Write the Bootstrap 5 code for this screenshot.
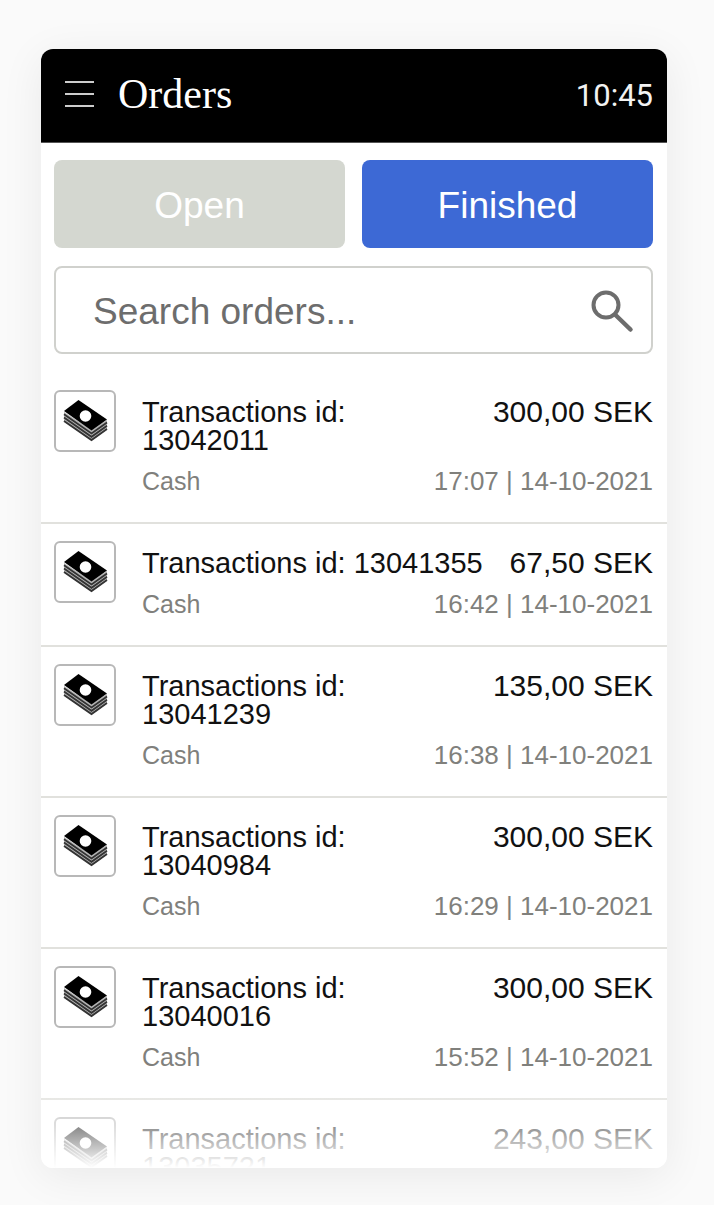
<!DOCTYPE html>
<html lang="en">
<head>
<meta charset="utf-8">
<meta name="viewport" content="width=device-width, initial-scale=1">
<title>Orders</title>
<link href="https://cdn.jsdelivr.net/npm/bootstrap@5.3.0/dist/css/bootstrap.min.css" rel="stylesheet">
<style>
  body { background: #fafafa; font-family: "Liberation Sans", Arial, sans-serif; color: #111; }
  .screen { padding: 49px 47px 37px 41px; }
  .panel { background: #fff; border-radius: 12px; box-shadow: 0 8px 44px rgba(0, 0, 0, .07); }
  .topbar { background: #000; color: #fff; height: 94px; padding: 0 14px 4px 24px; border-bottom: 1px solid #555; }
  .topbar h1 { font-family: "Liberation Serif", "Times New Roman", serif; font-size: 42px; line-height: 48px; }
  .clock { font-family: Roboto, sans-serif; font-size: 31px; line-height: 36px; color: #f2f2f2; padding-top: 4px; }
  .controls { padding: 17px 14px 0 13px; }
  .tabs { gap: 17px; }
  .tab-btn { height: 88px; border: 0; border-radius: 8px; font-size: 37px; line-height: 44px; padding: 4px 0 0; color: #fff; }
  .tab-btn.open { background: #d4d7d0; }
  .tab-btn.finished { background: #3d69d5; }
  .search { height: 88px; margin-top: 18px; border: 2px solid #d0d1cd; border-radius: 8px; padding: 4px 17px 0 37px; }
  .search input { font-size: 37px; line-height: 44px; color: #6d6d6d; padding: 0; }
  .search input::placeholder { color: #6d6d6d; opacity: 1; }
  .orders { margin-top: 19px; }
  .order { padding: 17px 14px 26px 13px; gap: 26px; border-bottom: 2px solid #e1e1dd; }
  .method { width: 62px; height: 62px; border: 2px solid #b8b8b8; border-radius: 6px; }
  .details { padding-top: 8px; min-width: 0; }
  .pair { gap: 20px; }
  .order-id { font-size: 29px; line-height: 28px; }
  .amount { font-size: 30px; line-height: 28px; }
  .meta { margin-top: 12px; line-height: 30px; color: #80807c; }
  .pay { font-size: 25px; }
  .when { font-size: 26px; }
  .fade-out { height: 90px; background: linear-gradient(rgba(255, 255, 255, 0), #fff); pointer-events: none; }
</style>
</head>
<body>
<svg class="d-none" aria-hidden="true">
  <symbol id="cash" viewBox="0 0 58 58">
    <path d="M8 20v9.500L35.500 48.500 51 37.500V28L35.500 38Z" fill="#b4b4b4"/>
    <path d="M22.500 8 8 19 35.500 38.500 51 27.500Z" fill="#000"/>
    <circle cx="29.500" cy="24" r="5.800" fill="#fff"/>
    <g fill="none" stroke="#333" stroke-width="1.800">
      <path d="M8 22.300 35.500 41.500 51 30.500"/>
      <path d="M8 25.600 35.500 44.800 51 33.800"/>
      <path d="M8 28.900 35.500 48.100 51 37.100"/>
    </g>
  </symbol>
</svg>
<main class="screen vh-100">
  <div class="panel h-100 d-flex flex-column overflow-hidden position-relative">
    <header class="topbar d-flex align-items-center flex-shrink-0">
      <button type="button" class="btn p-0 border-0 d-flex me-4" aria-label="Menu">
        <svg width="29" height="28" viewBox="0 0 29 28" stroke="#ccc" stroke-width="2"><path d="M0 2h29M0 14h29M0 26h29"/></svg>
      </button>
      <h1 class="m-0 fw-normal">Orders</h1>
      <span class="clock ms-auto">10:45</span>
    </header>
    <div class="controls flex-shrink-0">
      <div class="tabs d-flex">
        <button type="button" class="btn tab-btn open w-100">Open</button>
        <button type="button" class="btn tab-btn finished w-100">Finished</button>
      </div>
      <div class="search d-flex align-items-center">
        <input type="text" class="form-control border-0 shadow-none bg-transparent" placeholder="Search orders..." aria-label="Search orders">
        <svg class="flex-shrink-0" width="44" height="44" viewBox="0 0 44 44" fill="none" stroke="#6d6d6d"><circle cx="16" cy="15" r="12.500" stroke-width="4"/><path d="M25 24.500 40.500 39.500" stroke-width="4.500" stroke-linecap="round"/></svg>
      </div>
    </div>
    <ul class="orders list-unstyled mb-0 overflow-hidden">
      <li class="order d-flex align-items-start">
        <span class="method flex-shrink-0"><svg class="d-block" width="58" height="58" role="img" aria-label="Cash"><use href="#cash"/></svg></span>
        <div class="details flex-grow-1">
          <div class="pair d-flex justify-content-between"><span class="order-id">Transactions id: 13042011</span><span class="amount text-nowrap">300,00 SEK</span></div>
          <div class="meta d-flex justify-content-between"><span class="pay">Cash</span><span class="when">17:07 | 14-10-2021</span></div>
        </div>
      </li>
      <li class="order d-flex align-items-start">
        <span class="method flex-shrink-0"><svg class="d-block" width="58" height="58" role="img" aria-label="Cash"><use href="#cash"/></svg></span>
        <div class="details flex-grow-1">
          <div class="pair d-flex justify-content-between"><span class="order-id">Transactions id: 13041355</span><span class="amount text-nowrap">67,50 SEK</span></div>
          <div class="meta d-flex justify-content-between"><span class="pay">Cash</span><span class="when">16:42 | 14-10-2021</span></div>
        </div>
      </li>
      <li class="order d-flex align-items-start">
        <span class="method flex-shrink-0"><svg class="d-block" width="58" height="58" role="img" aria-label="Cash"><use href="#cash"/></svg></span>
        <div class="details flex-grow-1">
          <div class="pair d-flex justify-content-between"><span class="order-id">Transactions id: 13041239</span><span class="amount text-nowrap">135,00 SEK</span></div>
          <div class="meta d-flex justify-content-between"><span class="pay">Cash</span><span class="when">16:38 | 14-10-2021</span></div>
        </div>
      </li>
      <li class="order d-flex align-items-start">
        <span class="method flex-shrink-0"><svg class="d-block" width="58" height="58" role="img" aria-label="Cash"><use href="#cash"/></svg></span>
        <div class="details flex-grow-1">
          <div class="pair d-flex justify-content-between"><span class="order-id">Transactions id: 13040984</span><span class="amount text-nowrap">300,00 SEK</span></div>
          <div class="meta d-flex justify-content-between"><span class="pay">Cash</span><span class="when">16:29 | 14-10-2021</span></div>
        </div>
      </li>
      <li class="order d-flex align-items-start">
        <span class="method flex-shrink-0"><svg class="d-block" width="58" height="58" role="img" aria-label="Cash"><use href="#cash"/></svg></span>
        <div class="details flex-grow-1">
          <div class="pair d-flex justify-content-between"><span class="order-id">Transactions id: 13040016</span><span class="amount text-nowrap">300,00 SEK</span></div>
          <div class="meta d-flex justify-content-between"><span class="pay">Cash</span><span class="when">15:52 | 14-10-2021</span></div>
        </div>
      </li>
      <li class="order d-flex align-items-start">
        <span class="method flex-shrink-0"><svg class="d-block" width="58" height="58" role="img" aria-label="Cash"><use href="#cash"/></svg></span>
        <div class="details flex-grow-1">
          <div class="pair d-flex justify-content-between"><span class="order-id">Transactions id: 13035721</span><span class="amount text-nowrap">243,00 SEK</span></div>
        </div>
      </li>
    </ul>
    <div class="fade-out position-absolute bottom-0 start-0 w-100"></div>
  </div>
</main>
<script src="https://cdn.jsdelivr.net/npm/bootstrap@5.3.0/dist/js/bootstrap.bundle.min.js"></script>
</body>
</html>
